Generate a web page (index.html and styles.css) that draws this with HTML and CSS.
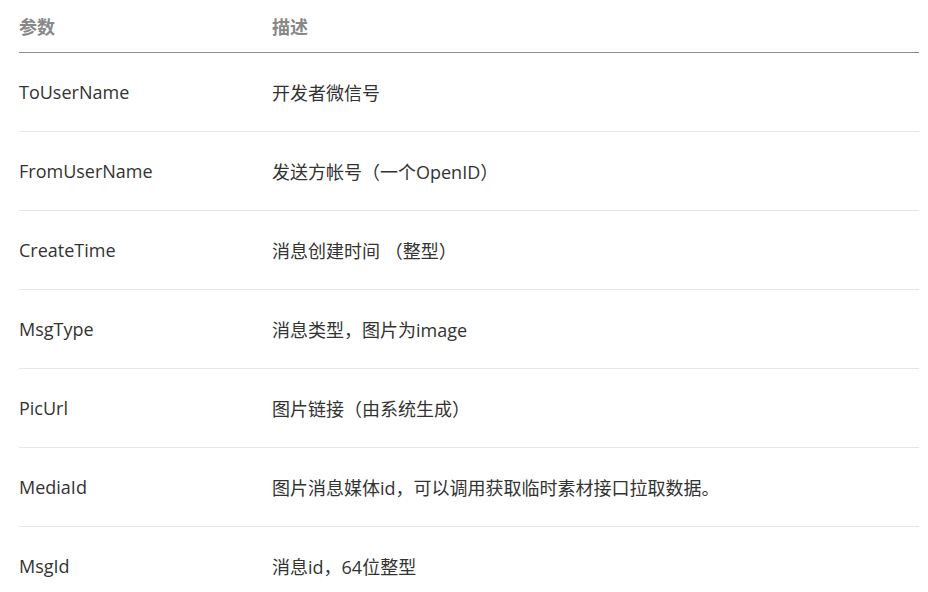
FILE: index.html
```html
<!DOCTYPE html>
<html>
<head>
<meta charset="utf-8">
<link rel="stylesheet" href="styles.css">
</head>
<body>
<div class="table">
  <div class="row head"><div class="c1">参数</div><div class="c2">描述</div></div>
  <div class="row"><div class="c1">ToUserName</div><div class="c2">开发者微信号</div></div>
  <div class="row"><div class="c1">FromUserName</div><div class="c2">发送方帐号（一个OpenID）</div></div>
  <div class="row"><div class="c1">CreateTime</div><div class="c2">消息创建时间 （整型）</div></div>
  <div class="row"><div class="c1">MsgType</div><div class="c2">消息类型，图片为image</div></div>
  <div class="row"><div class="c1">PicUrl</div><div class="c2">图片链接（由系统生成）</div></div>
  <div class="row"><div class="c1">MediaId</div><div class="c2">图片消息媒体id，可以调用获取临时素材接口拉取数据。</div></div>
  <div class="row last"><div class="c1">MsgId</div><div class="c2">消息id，64位整型</div></div>
</div>
</body>
</html>
```
FILE: styles.css
```css
html, body {
  margin: 0;
  padding: 0;
  background: #fff;
}
.table {
  margin-left: 19px;
  width: 900px;
  font-family: "Open Sans", "Noto Sans CJK SC", sans-serif;
  font-size: 18px;
  color: #333;
}
.row {
  display: grid;
  grid-template-columns: 253px 1fr;
  align-items: center;
  height: 78px;
  border-bottom: 1px solid #e6e6e6;
}
.row.head {
  height: 52px;
  border-bottom: 1px solid #8c8c8c;
  font-weight: bold;
  color: #888;
}
.row.last {
  border-bottom: none;
}
```
